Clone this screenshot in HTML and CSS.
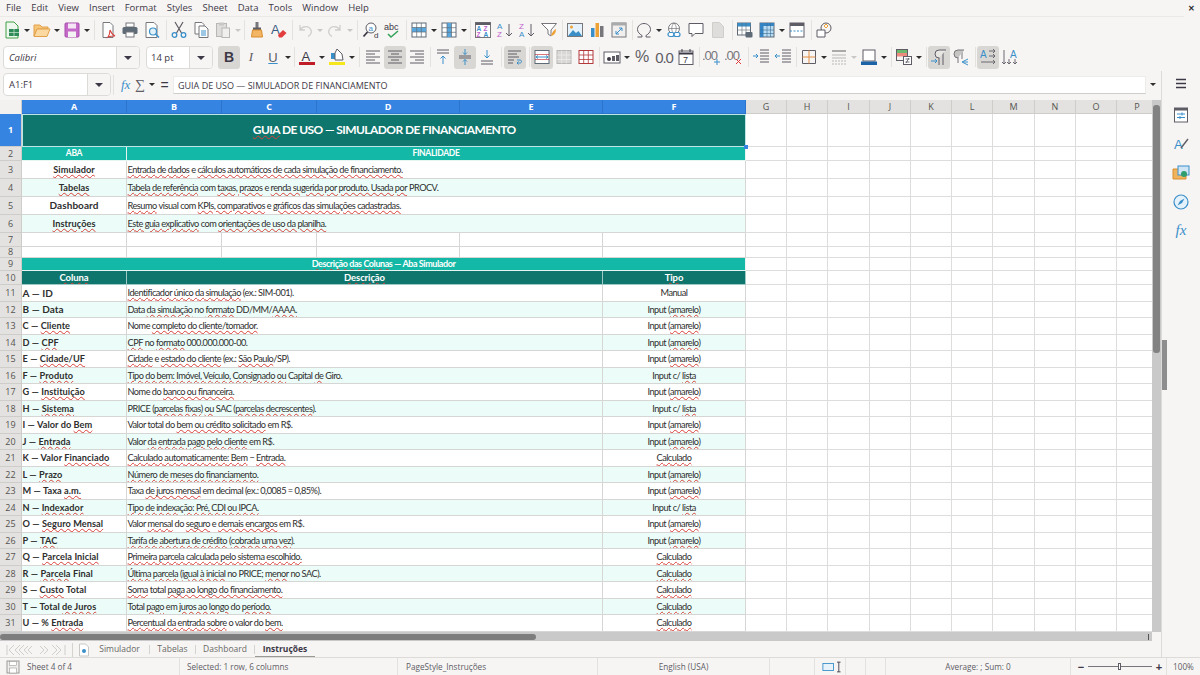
FILE: index.html
```html
<!DOCTYPE html>
<html lang="pt">
<head>
<meta charset="utf-8">
<title>Simulador de Financiamento</title>
<link rel="stylesheet" href="styles.css">
</head>
<body>
<header class="menubar">
  <span>File</span><span>Edit</span><span>View</span><span>Insert</span><span>Format</span><span>Styles</span><span>Sheet</span><span>Data</span><span>Tools</span><span>Window</span><span>Help</span>
  <span class="close">✕</span>
</header>

<div class="tb tb1">
  <span class="ib"><svg viewBox="0 0 18 18"><path d="M3 1h8l4 4v12H3z" fill="#eef7ee" stroke="#43a047"/><rect x="6" y="8" width="10" height="7" fill="#2e8b57"/><path d="M6 11.5h10M11 8v7" stroke="#cfe8d5" stroke-width=".7"/></svg></span><span class="dd"></span>
  <span class="ib"><svg viewBox="0 0 18 18"><path d="M1 4h6l2 2h6v2H4L1 15z" fill="#f6c67a" stroke="#e2a14a"/><path d="M4 8h13l-3 7.5H1z" fill="#fcd9a0" stroke="#e2a14a"/></svg></span><span class="dd"></span>
  <span class="ib"><svg viewBox="0 0 18 18"><rect x="2" y="2" width="14" height="14" rx="1" fill="#c56ac9" stroke="#a94dae"/><rect x="5" y="2.5" width="8" height="5" fill="#f5e6f6"/><rect x="5" y="10.5" width="8" height="5.5" fill="#f3f3f3"/></svg></span><span class="dd"></span>
  <span class="s6"></span>
  <span class="ib"><svg viewBox="0 0 18 18"><path d="M4 1.5h7l3 3V16.5H4z" fill="#fff" stroke="#77767b"/><path d="M9 16c2-3 2-6 2-7 1 3 3 5 5 6-2 0-5 0-7 1z" fill="none" stroke="#d9433f" stroke-width="1.1"/></svg></span>
  <span class="ib"><svg viewBox="0 0 18 18"><rect x="5" y="2" width="8" height="4" fill="#fff" stroke="#77767b"/><rect x="1.5" y="6" width="15" height="7" rx="1.5" fill="#5e6b76"/><rect x="5" y="11" width="8" height="5" fill="#fff" stroke="#77767b"/></svg></span>
  <span class="ib"><svg viewBox="0 0 18 18"><path d="M3 1.5h8l3 3V16.500H3z" fill="#fff" stroke="#77767b"/><circle cx="10" cy="10.500" r="3.500" fill="#e3f1fb" stroke="#3a8fc9" stroke-width="1.200"/><path d="M12.500 13l3.500 3.500" stroke="#3a8fc9" stroke-width="1.500"/></svg></span>
  <span class="s5"></span>
  <span class="ib"><svg viewBox="0 0 18 18"><path d="M5 1l6.500 11M13 1L6.500 12" stroke="#5e5c64" stroke-width="1.200" fill="none"/><circle cx="4.500" cy="14" r="2.300" fill="none" stroke="#3a8fc9" stroke-width="1.300"/><circle cx="13.500" cy="14" r="2.300" fill="none" stroke="#3a8fc9" stroke-width="1.300"/></svg></span>
  <span class="ib"><svg viewBox="0 0 18 18"><path d="M3 1.500h7l2 2V13H3z" fill="#fff" stroke="#77767b"/><path d="M7 5h6l3 3v8.500H7z" fill="#fff" stroke="#77767b"/><path d="M9 10h5M9 12h5M9 14h5" stroke="#3a8fc9"/></svg></span>
  <span class="ib off"><svg viewBox="0 0 18 18"><rect x="2.500" y="2.500" width="10" height="13" fill="#dedddb" stroke="#b8b7b5"/><rect x="5" y="1.500" width="5" height="3" fill="#c8c7c5"/><rect x="8" y="7" width="7.500" height="9.500" fill="#f0efee" stroke="#b8b7b5"/></svg></span><span class="dd off"></span>
  <span class="s4"></span>
  <span class="ib"><svg viewBox="0 0 18 18"><rect x="7.500" y="1" width="3" height="6" fill="#77767b"/><rect x="5" y="6.500" width="8" height="2.500" fill="#5e5c64"/><path d="M4.500 9h9l1 7h-11z" fill="#f3b664" stroke="#d98d2c"/></svg></span>
  <span class="ib"><svg viewBox="0 0 18 18"><text x="1" y="13" class="g" fill="#3d5a80">A</text><path d="M8 14l5-5 3.500 3-4.500 4.500H9z" fill="#e23c3c"/></svg></span>
  <span class="s4"></span>
  <span class="ib off"><svg viewBox="0 0 18 18"><path d="M4 4v5h5M4.500 8.500C7 4.500 13 4.500 15 9c.8 2.500-.5 5-3 6.500" fill="none" stroke="#cfcecb" stroke-width="1.300"/></svg></span><span class="dd off"></span>
  <span class="ib off"><svg viewBox="0 0 18 18"><path d="M14 4v5H9M13.500 8.500C11 4.500 5 4.500 3 9c-.8 2.500.5 5 3 6.500" fill="none" stroke="#cfcecb" stroke-width="1.300"/></svg></span><span class="dd off"></span>
  <span class="s6"></span>
  <span class="ib"><svg viewBox="0 0 18 18"><circle cx="9" cy="7" r="5" fill="#fff" stroke="#5e5c64"/><path d="M5.500 11L1.500 15.500" stroke="#3d3846" stroke-width="1.800"/><text x="6.500" y="9.500" class="g7" fill="#3a8fc9">a</text><text x="12" y="17" class="g7" fill="#3d3846">d</text></svg></span>
  <span class="ib"><svg viewBox="0 0 18 18"><text x="0" y="9" class="g8" fill="#3d3846">abc</text><path d="M4 13l3 3 7-6" fill="none" stroke="#33a15a" stroke-width="1.500"/></svg></span>
  <span class="s4"></span>
  <span class="ib"><svg viewBox="0 0 18 18"><rect x="2" y="2" width="14" height="14" fill="#fff" stroke="#5e6b76"/><rect x="2" y="6.500" width="14" height="4.500" fill="#5aa7de"/><path d="M2 6.500h14M2 11h14M6.700 2v14M11.300 2v14" stroke="#5e6b76" stroke-width=".7"/></svg></span><span class="dd"></span>
  <span class="ib"><svg viewBox="0 0 18 18"><rect x="2" y="2" width="14" height="14" fill="#fff" stroke="#5e6b76"/><rect x="7" y="2" width="4.500" height="14" fill="#5aa7de"/><path d="M2 6.700h14M2 11.300h14M7 2v14M11.500 2v14" stroke="#5e6b76" stroke-width=".7"/></svg></span><span class="dd"></span>
  <span class="s4"></span>
  <span class="ib"><svg viewBox="0 0 18 18"><rect x="1.500" y="1.500" width="15" height="15" fill="#fff" stroke="#77767b"/><rect x="1.500" y="1.500" width="15" height="2.500" fill="#5e5c64"/><text x="2.500" y="10" class="g6" fill="#3a8fc9">A</text><text x="9.500" y="10" class="g6" fill="#c061cb">Z</text><text x="2.500" y="16" class="g6" fill="#c061cb">Z</text><text x="9.500" y="16" class="g6" fill="#3a8fc9">A</text></svg></span>
  <span class="ib"><svg viewBox="0 0 18 18"><text x="1" y="8" class="g7" fill="#3a8fc9">A</text><text x="1" y="16" class="g7" fill="#c061cb">Z</text><path d="M13 3v12m-3-3l3 3 3-3" fill="none" stroke="#5e5c64"/></svg></span>
  <span class="ib"><svg viewBox="0 0 18 18"><text x="1" y="8" class="g7" fill="#c061cb">Z</text><text x="1" y="16" class="g7" fill="#3a8fc9">A</text><path d="M13 3v12m-3-3l3 3 3-3" fill="none" stroke="#5e5c64"/></svg></span>
  <span class="ib"><svg viewBox="0 0 18 18"><path d="M1.500 2.500h15L11 9v6l-3-2V9z" fill="#fff" stroke="#77767b"/><path d="M11 15c1-4 3-6 5-7 0 3-1 6-5 7z" fill="#efa234"/></svg></span>
  <span class="s4"></span>
  <span class="ib"><svg viewBox="0 0 18 18"><rect x="1.500" y="2.500" width="15" height="13" fill="#e5f2fb" stroke="#77767b"/><circle cx="5.500" cy="6" r="1.500" fill="#efa234"/><path d="M2 15l5-6 3 3 2.500-2 3.500 5z" fill="#3a8fc9"/></svg></span>
  <span class="ib"><svg viewBox="0 0 18 18"><rect x="3" y="7" width="3.500" height="9" fill="#3a8fc9"/><rect x="7.500" y="2" width="3.500" height="14" fill="#efa234"/><rect x="12" y="5" width="3.500" height="11" fill="#77767b"/></svg></span>
  <span class="ib"><svg viewBox="0 0 18 18"><rect x="2" y="2" width="14" height="14" fill="#f0efee" stroke="#77767b"/><rect x="2" y="2" width="14" height="2.500" fill="#aaa"/><path d="M6 13l6-6M12 7H9M12 7v3M6 13h3M6 13v-3" fill="none" stroke="#3a8fc9"/></svg></span>
  <span class="s3"></span>
  <span class="ib"><svg viewBox="0 0 18 18"><path d="M2.500 16H7v-1.500C4.500 13 2.500 11 2.500 8.500 2.500 5 5.500 2.500 9 2.500s6.500 2.500 6.500 6c0 2.500-2 4.500-4.500 6V16h4.500" fill="none" stroke="#5e5c64"/></svg></span><span class="dd"></span>
  <span class="ib"><svg viewBox="0 0 18 18"><circle cx="9" cy="7.500" r="5.500" fill="#fff" stroke="#77767b"/><path d="M3.500 7.500h11M9 2c-3 3-3 8 0 11M9 2c3 3 3 8 0 11" fill="none" stroke="#77767b" stroke-width=".7"/><rect x="3" y="11.500" width="6" height="4" rx="2" fill="#fff" stroke="#3a8fc9" stroke-width="1.200"/><rect x="9" y="11.500" width="6" height="4" rx="2" fill="#fff" stroke="#3a8fc9" stroke-width="1.200"/></svg></span>
  <span class="ib"><svg viewBox="0 0 18 18"><path d="M2 2.500h14v10H8l-3 3v-3H2z" fill="#fff" stroke="#5e5c64"/></svg></span>
  <span class="ib off"><svg viewBox="0 0 18 18"><path d="M3.500 1.500h7l4 4v11h-11z" fill="#dedddb" stroke="#cfcecb"/></svg></span>
  <span class="s5"></span>
  <span class="ib"><svg viewBox="0 0 18 18"><rect x="1.500" y="2" width="13" height="12" fill="#fff" stroke="#5e6b76"/><rect x="1.500" y="2" width="13" height="3.500" fill="#3a8fc9"/><path d="M1.500 9h13M6 2v12M10 2v12" stroke="#5e6b76" stroke-width=".6"/><rect x="9.500" y="11" width="7" height="5.500" rx="1" fill="#5e6b76"/></svg></span>
  <span class="ib"><svg viewBox="0 0 18 18"><rect x="2" y="2" width="14" height="14" fill="#b9dcf2" stroke="#5e6b76"/><rect x="2" y="2" width="14" height="3" fill="#3584c4"/><rect x="2" y="2" width="3.500" height="14" fill="#3584c4"/><path d="M2 9h14M2 12.500h14M9 2v14M12.500 2v14" stroke="#3a6d94" stroke-width=".6"/></svg></span><span class="dd"></span>
  <span class="ib"><svg viewBox="0 0 18 18"><rect x="2" y="2" width="14" height="14" fill="#fff" stroke="#5e5c64"/><rect x="2" y="2" width="14" height="3" fill="#5e5c64"/><path d="M2 10h14" stroke="#3a8fc9" stroke-dasharray="2 1.500"/></svg></span>
  <span class="s5"></span>
  <span class="ib"><svg viewBox="0 0 18 18"><circle cx="11" cy="7" r="5" fill="none" stroke="#5e5c64"/><path d="M2 9h8v7H2z" fill="#fff" stroke="#5e5c64"/><path d="M9 5l2-2 2 2-2 2z" fill="none" stroke="#efa234"/></svg></span>
</div>

<div class="tb tb2">
  <span class="combo font"><em>Calibri</em><span class="arrow"></span></span>
  <span class="combo size"><span class="val">14 pt</span><span class="arrow"></span></span>
  <span class="ib on txt bold">B</span>
  <span class="ib txt ital">I</span>
  <span class="ib txt under">U</span><span class="dd"></span>
  <span class="s4"></span>
  <span class="ib"><svg viewBox="0 0 18 18"><text x="3.500" y="12.500" class="g" fill="#3d3846">A</text><rect x="1" y="14" width="16" height="3" fill="#c01c28"/></svg></span><span class="dd"></span>
  <span class="ib"><svg viewBox="0 0 18 18"><path d="M3 5h6v6H3z" fill="#3a8fc9"/><path d="M9 1l5 5 1 6H7V5z" fill="#fff" stroke="#5e5c64"/><rect x="1" y="14" width="16" height="3" fill="#f6e71c"/></svg></span><span class="dd"></span>
  <span class="s6"></span>
  <span class="ib"><svg viewBox="0 0 18 18"><path d="M2 3h14M2 6h9M2 9h14M2 12h9M2 15h14" stroke="#5e5c64"/></svg></span>
  <span class="ib on"><svg viewBox="0 0 18 18"><path d="M2 3h14M5 6h8M2 9h14M5 12h8M2 15h14" stroke="#5e5c64"/></svg></span>
  <span class="ib"><svg viewBox="0 0 18 18"><path d="M2 3h14M7 6h9M2 9h14M7 12h9M2 15h14" stroke="#5e5c64"/></svg></span>
  <span class="s4"></span>
  <span class="ib"><svg viewBox="0 0 18 18"><path d="M3 2h12M3 5h12" fill="none" stroke="#5e5c64"/><path d="M9 16V8m-2.500 2.500L9 8l2.500 2.500" fill="none" stroke="#3a8fc9"/></svg></span>
  <span class="ib on"><svg viewBox="0 0 18 18"><path d="M3 8h12M3 10h12" stroke="#5e5c64"/><path d="M9 1v5.500M7 4.500L9 6.500 11 4.500M9 17v-5.500M7 13.500l2-2 2 2" fill="none" stroke="#3a8fc9"/></svg></span>
  <span class="ib"><svg viewBox="0 0 18 18"><path d="M3 13h12M3 16h12" stroke="#5e5c64"/><path d="M9 2v8m-2.500-2.500L9 10l2.500-2.500" fill="none" stroke="#3a8fc9"/></svg></span>
  <span class="s6"></span>
  <span class="ib on"><svg viewBox="0 0 18 18"><path d="M2 3h13M2 6h9M2 9h11M2 12h6M2 15h5" stroke="#5e5c64"/><path d="M11 12h3c2 0 2 3 0 3h-3m1.500-1.500L11 15l1.500 1.500" fill="none" stroke="#3a8fc9"/></svg></span>
  <span class="s5"></span>
  <span class="ib on"><svg viewBox="0 0 18 18"><rect x="2" y="2.500" width="14" height="13" fill="#fff" stroke="#5e6b76"/><path d="M2 6.500h14M2 11.500h14" stroke="#c01c28" stroke-width=".6"/><path d="M3 9h12M3 9l2-1.500M3 9l2 1.500M15 9l-2-1.500M15 9l-2 1.500" stroke="#3a8fc9" fill="none"/></svg></span>
  <span class="ib off"><svg viewBox="0 0 18 18"><rect x="2" y="2.500" width="14" height="13" fill="#d8d7d5" stroke="#b8b7b5"/><path d="M2 7h14M2 11.500h14M6.700 2.500v13M11.300 2.500v13" stroke="#f0efee" stroke-width=".7"/></svg></span>
  <span class="ib"><svg viewBox="0 0 18 18"><rect x="2" y="2.500" width="14" height="13" fill="#fff" stroke="#b33a3a"/><path d="M2 7h14M2 11.500h14M6.700 2.500v13M11.300 2.500v13" stroke="#b33a3a" stroke-width=".8"/></svg></span>
  <span class="s4"></span>
  <span class="ib"><svg viewBox="0 0 18 18"><rect x="1" y="4" width="16" height="11" fill="#fff" stroke="#5e5c64"/><circle cx="6" cy="11" r="2" fill="#3d3846"/><rect x="9" y="8" width="3" height="5" fill="#5e5c64"/><rect x="13" y="7" width="3" height="6" fill="#5e5c64"/></svg></span><span class="dd"></span>
  <span class="ib txt pct">%</span>
  <span class="ib txt num">0.0</span>
  <span class="ib"><svg viewBox="0 0 18 18"><rect x="2" y="3" width="14" height="13.500" fill="#fff" stroke="#5e5c64"/><path d="M2 5.500h14" stroke="#3d3846" stroke-width="2"/><path d="M5 1v3M13 1v3" stroke="#3d3846"/><text x="6" y="14.500" class="g8" fill="#3d3846">7</text></svg></span>
  <span class="s4"></span>
  <span class="ib"><svg viewBox="0 0 18 18"><text x="-1" y="12" class="g9" fill="#77767b">.00</text><path d="M14 11v6M11 14h6" stroke="#3a8fc9"/></svg></span>
  <span class="ib"><svg viewBox="0 0 18 18"><text x="-1" y="12" class="g9" fill="#77767b">.00</text><path d="M11 11l5 5M16 11l-5 5" stroke="#e23c3c"/></svg></span>
  <span class="s5"></span>
  <span class="ib"><svg viewBox="0 0 18 18"><path d="M8 2h9M8 5h9M8 8h9M8 11h9M8 14h9" stroke="#5e5c64"/><path d="M1 8h5M4 6l2 2-2 2" fill="none" stroke="#3a8fc9"/></svg></span>
  <span class="ib"><svg viewBox="0 0 18 18"><path d="M8 2h9M8 5h9M8 8h9M8 11h9M8 14h9" stroke="#5e5c64"/><path d="M6 8H1M3 6L1 8l2 2" fill="none" stroke="#3a8fc9"/></svg></span>
  <span class="s4"></span>
  <span class="ib"><svg viewBox="0 0 18 18"><path d="M2.500 2.500h13v13h-13z" fill="none" stroke="#5e5c64"/><path d="M9 2.500v13M2.500 9h13" stroke="#e08e45"/></svg></span><span class="dd"></span>
  <span class="ib off"><svg viewBox="0 0 18 18"><path d="M2 3h14" stroke="#aaa" stroke-width="2"/><path d="M2 7h14M2 10h14" stroke="#b8b7b5"/><path d="M2 13h14M2 16h14" stroke="#b8b7b5" stroke-dasharray="2 1"/></svg></span><span class="dd off"></span>
  <span class="ib"><svg viewBox="0 0 18 18"><rect x="3" y="2" width="12" height="11" fill="#fff" stroke="#5e5c64"/><rect x="1" y="13.500" width="16" height="3.500" fill="#1c62a6"/></svg></span><span class="dd"></span>
  <span class="s5"></span>
  <span class="ib"><svg viewBox="0 0 18 18"><rect x="1.500" y="1.500" width="11" height="3.500" fill="#6fb96f"/><rect x="1.500" y="5" width="11" height="3.500" fill="#ef8a7f"/><rect x="1.500" y="1.500" width="11" height="11" fill="none" stroke="#5e5c64"/><rect x="8.500" y="8.500" width="8" height="8" fill="#fff" stroke="#5e5c64"/><path d="M10.500 11h4M10.500 14h4M11 15l3-5" stroke="#3d3846" stroke-width=".7"/></svg></span><span class="dd"></span>
  <span class="s5"></span>
  <span class="ib on"><svg viewBox="0 0 18 18"><path d="M9 3v14M13 3v14" stroke="#5e5c64"/><path d="M16 2H9a4 4 0 0 0 0 8" fill="#e8e6e3" stroke="#5e5c64"/><path d="M1 13h6M5 11l2 2-2 2" fill="none" stroke="#3a8fc9"/></svg></span>
  <span class="ib"><svg viewBox="0 0 18 18"><path d="M6 3v12M10 3v8" stroke="#77767b"/><path d="M12 2H6a4 4 0 0 0 0 8" fill="#c6c5c3" stroke="#77767b"/><path d="M10 14l6-3M10 14l6 3M11 14h5" stroke="#3a8fc9" fill="none"/></svg></span>
  <span class="s5"></span>
  <span class="ib on"><svg viewBox="0 0 18 18"><text x="1" y="10" class="g8b" fill="#3a8fc9">A</text><path d="M10 3h6M14 1l2 2-2 2M10 8h6M14 6l2 2-2 2M2 14h14M14 12l2 2-2 2" fill="none" stroke="#5e5c64" stroke-width=".9"/></svg></span>
  <span class="ib"><svg viewBox="0 0 18 18"><text x="9" y="10" class="g8b" fill="#3a8fc9">A</text><path d="M3 2v14M1 14l2 2 2-2M8 11v5M6 14l2 2 2-2M14 11v5M12 14l2 2 2-2" fill="none" stroke="#5e5c64" stroke-width=".9"/></svg></span>
</div>

<div class="workspace">
  <main class="center">
    <div class="formula">
      <span class="combo name"><span class="val">A1:F1</span><span class="arrow"></span></span>
      <span class="fsep"></span>
      <span class="fx">fx</span>
      <span class="sigma">∑</span><span class="dd"></span>
      <span class="eq">=</span>
      <span class="finput">GUIA DE USO — SIMULADOR DE FINANCIAMENTO</span>
      <span class="dd fdd"></span>
    </div>
    <div class="sheetrow">
      <div class="sheet">
        <div class="corner"></div><div class="ch sel">A</div><div class="ch sel">B</div><div class="ch sel">C</div><div class="ch sel">D</div><div class="ch sel">E</div><div class="ch sel">F</div><div class="ch">G</div><div class="ch">H</div><div class="ch">I</div><div class="ch">J</div><div class="ch">K</div><div class="ch">L</div><div class="ch">M</div><div class="ch">N</div><div class="ch">O</div><div class="ch">P</div>

        <div class="rh sel">1</div><div class="c title s6c"><span class="titletext"><u>GUIA</u> DE USO — SIMULADOR DE FINANCIAMENTO</span><span class="handle"></span></div><i></i><i></i><i></i><i></i><i></i><i></i><i></i><i></i><i></i><i></i>
        <div class="rh">2</div><div class="c h2 ctr bd">ABA</div><div class="c h2 ctr s5c bd">FINALIDADE</div><i></i><i></i><i></i><i></i><i></i><i></i><i></i><i></i><i></i><i></i>
        <div class="rh">3</div><div class="c ctr bd"><u>Simulador</u></div><div class="c s5c"><u>Entrada de dados</u> e <u>cálculos automáticos de cada simulação de financiamento.</u></div><i></i><i></i><i></i><i></i><i></i><i></i><i></i><i></i><i></i><i></i>
        <div class="rh">4</div><div class="c ctr bd m"><u>Tabelas</u></div><div class="c s5c m"><u>Tabela de referência</u> com <u>taxas, prazos</u> e <u>renda sugerida por produto. Usada por</u> PROCV.</div><i></i><i></i><i></i><i></i><i></i><i></i><i></i><i></i><i></i><i></i>
        <div class="rh">5</div><div class="c ctr bd big">Dashboard</div><div class="c s5c"><u>Resumo</u> visual com <u>KPIs, comparativos</u> e <u>gráficos das simulações cadastradas.</u></div><i></i><i></i><i></i><i></i><i></i><i></i><i></i><i></i><i></i><i></i>
        <div class="rh">6</div><div class="c ctr bd m"><u>Instruções</u></div><div class="c s5c m"><u>Este guia explicativo</u> com <u>orientações de uso da planilha.</u></div><i></i><i></i><i></i><i></i><i></i><i></i><i></i><i></i><i></i><i></i>
        <div class="rh">7</div><div class="c"></div><div class="c"></div><div class="c"></div><div class="c"></div><div class="c"></div><div class="c"></div><i></i><i></i><i></i><i></i><i></i><i></i><i></i><i></i><i></i><i></i>
        <div class="rh">8</div><div class="c"></div><div class="c"></div><div class="c"></div><div class="c"></div><div class="c"></div><div class="c"></div><i></i><i></i><i></i><i></i><i></i><i></i><i></i><i></i><i></i><i></i>
        <div class="rh">9</div><div class="c h2 ctr s6c sec"><u>Descrição das Colunas</u> — Aba Simulador</div><i></i><i></i><i></i><i></i><i></i><i></i><i></i><i></i><i></i><i></i>
        <div class="rh">10</div><div class="c h3 ctr"><u>Coluna</u></div><div class="c h3 ctr s4c"><u>Descrição</u></div><div class="c h3 ctr"><u>Tipo</u></div><i></i><i></i><i></i><i></i><i></i><i></i><i></i><i></i><i></i><i></i>

        <div class="rh">11</div><div class="c bd big">A — ID</div><div class="c s4c"><u>Identificador único da simulação</u> (ex.: SIM-001).</div><div class="c ctr">Manual</div><i></i><i></i><i></i><i></i><i></i><i></i><i></i><i></i><i></i><i></i>
        <div class="rh">12</div><div class="c bd big m">B — Data</div><div class="c s4c m">Data <u>da simulação</u> no <u>formato</u> DD/MM/<u>AAAA.</u></div><div class="c ctr m">Input (<u>amarelo</u>)</div><i></i><i></i><i></i><i></i><i></i><i></i><i></i><i></i><i></i><i></i>
        <div class="rh">13</div><div class="c bd">C — <u>Cliente</u></div><div class="c s4c">Nome <u>completo do cliente/tomador.</u></div><div class="c ctr">Input (<u>amarelo</u>)</div><i></i><i></i><i></i><i></i><i></i><i></i><i></i><i></i><i></i><i></i>
        <div class="rh">14</div><div class="c bd m">D — <u>CPF</u></div><div class="c s4c m"><u>CPF</u> no <u>formato</u> 000.000.000-00.</div><div class="c ctr m">Input (<u>amarelo</u>)</div><i></i><i></i><i></i><i></i><i></i><i></i><i></i><i></i><i></i><i></i>
        <div class="rh">15</div><div class="c bd">E — <u>Cidade/UF</u></div><div class="c s4c"><u>Cidade</u> e <u>estado do cliente</u> (ex.: <u>São Paulo</u>/SP).</div><div class="c ctr">Input (<u>amarelo</u>)</div><i></i><i></i><i></i><i></i><i></i><i></i><i></i><i></i><i></i><i></i>
        <div class="rh">16</div><div class="c bd m">F — <u>Produto</u></div><div class="c s4c m"><u>Tipo do bem: Imóvel, Veículo, Consignado ou</u> Capital <u>de</u> Giro.</div><div class="c ctr m">Input c/ <u>lista</u></div><i></i><i></i><i></i><i></i><i></i><i></i><i></i><i></i><i></i><i></i>
        <div class="rh">17</div><div class="c bd">G — <u>Instituição</u></div><div class="c s4c">Nome do <u>banco ou financeira.</u></div><div class="c ctr">Input (<u>amarelo</u>)</div><i></i><i></i><i></i><i></i><i></i><i></i><i></i><i></i><i></i><i></i>
        <div class="rh">18</div><div class="c bd m">H — <u>Sistema</u></div><div class="c s4c m">PRICE (<u>parcelas fixas</u>) <u>ou</u> SAC (<u>parcelas decrescentes</u>).</div><div class="c ctr m">Input c/ <u>lista</u></div><i></i><i></i><i></i><i></i><i></i><i></i><i></i><i></i><i></i><i></i>
        <div class="rh">19</div><div class="c bd">I — Valor do <u>Bem</u></div><div class="c s4c">Valor total do <u>bem ou crédito solicitado</u> em R$.</div><div class="c ctr">Input (<u>amarelo</u>)</div><i></i><i></i><i></i><i></i><i></i><i></i><i></i><i></i><i></i><i></i>
        <div class="rh">20</div><div class="c bd m">J — <u>Entrada</u></div><div class="c s4c m">Valor <u>da entrada pago pelo cliente</u> em R$.</div><div class="c ctr m">Input (<u>amarelo</u>)</div><i></i><i></i><i></i><i></i><i></i><i></i><i></i><i></i><i></i><i></i>
        <div class="rh">21</div><div class="c bd">K — Valor <u>Financiado</u></div><div class="c s4c"><u>Calculado automaticamente: Bem</u> − <u>Entrada.</u></div><div class="c ctr"><u>Calculado</u></div><i></i><i></i><i></i><i></i><i></i><i></i><i></i><i></i><i></i><i></i>
        <div class="rh">22</div><div class="c bd m">L — <u>Prazo</u></div><div class="c s4c m"><u>Número de meses do financiamento.</u></div><div class="c ctr m">Input (<u>amarelo</u>)</div><i></i><i></i><i></i><i></i><i></i><i></i><i></i><i></i><i></i><i></i>
        <div class="rh">23</div><div class="c bd">M — Taxa <u>a.m.</u></div><div class="c s4c">Taxa <u>de juros mensal</u> em decimal (ex.: 0,0085 = 0,85%).</div><div class="c ctr">Input (<u>amarelo</u>)</div><i></i><i></i><i></i><i></i><i></i><i></i><i></i><i></i><i></i><i></i>
        <div class="rh">24</div><div class="c bd m">N — <u>Indexador</u></div><div class="c s4c m"><u>Tipo de indexação: Pré, CDI ou IPCA.</u></div><div class="c ctr m">Input c/ <u>lista</u></div><i></i><i></i><i></i><i></i><i></i><i></i><i></i><i></i><i></i><i></i>
        <div class="rh">25</div><div class="c bd">O — <u>Seguro Mensal</u></div><div class="c s4c">Valor <u>mensal</u> do <u>seguro</u> e <u>demais encargos</u> em R$.</div><div class="c ctr">Input (<u>amarelo</u>)</div><i></i><i></i><i></i><i></i><i></i><i></i><i></i><i></i><i></i><i></i>
        <div class="rh">26</div><div class="c bd m">P — <u>TAC</u></div><div class="c s4c m"><u>Tarifa de abertura de crédito</u> (<u>cobrada uma vez</u>).</div><div class="c ctr m">Input (<u>amarelo</u>)</div><i></i><i></i><i></i><i></i><i></i><i></i><i></i><i></i><i></i><i></i>
        <div class="rh">27</div><div class="c bd">Q — <u>Parcela Inicial</u></div><div class="c s4c"><u>Primeira parcela calculada pelo sistema escolhido.</u></div><div class="c ctr"><u>Calculado</u></div><i></i><i></i><i></i><i></i><i></i><i></i><i></i><i></i><i></i><i></i>
        <div class="rh">28</div><div class="c bd m">R — <u>Parcela</u> Final</div><div class="c s4c m"><u>Última parcela</u> (<u>igual à inicial</u> no PRICE; <u>menor</u> no SAC).</div><div class="c ctr m"><u>Calculado</u></div><i></i><i></i><i></i><i></i><i></i><i></i><i></i><i></i><i></i><i></i>
        <div class="rh">29</div><div class="c bd">S — <u>Custo</u> Total</div><div class="c s4c"><u>Soma</u> total <u>paga ao longo do financiamento.</u></div><div class="c ctr"><u>Calculado</u></div><i></i><i></i><i></i><i></i><i></i><i></i><i></i><i></i><i></i><i></i>
        <div class="rh">30</div><div class="c bd m">T — Total <u>de Juros</u></div><div class="c s4c m">Total <u>pago</u> em <u>juros ao longo</u> do <u>período.</u></div><div class="c ctr m"><u>Calculado</u></div><i></i><i></i><i></i><i></i><i></i><i></i><i></i><i></i><i></i><i></i>
        <div class="rh">31</div><div class="c bd">U — % <u>Entrada</u></div><div class="c s4c"><u>Percentual da entrada sobre</u> o valor do <u>bem.</u></div><div class="c ctr"><u>Calculado</u></div><i></i><i></i><i></i><i></i><i></i><i></i><i></i><i></i><i></i><i></i>
      </div>
      <div class="vscroll"><div class="vthumb"></div></div>
    </div>
    <div class="hscroll"><div class="hthumb"></div><div class="htick"></div></div>
    <nav class="tabs">
      <span class="navbtns"><svg viewBox="0 0 60 14"><path d="M1 2v10M8 2L3 7l5 5M18 2l-5 5 5 5M14 2l-5 5 5 5M22 3l-4 4 4 4M26 3l-4 4 4 4M34 3l4 4-4 4M38 3l4 4-4 4M46 2l5 5-5 5M50 2l5 5-5 5M59 2v10" fill="none" stroke="#cfcecb"/></svg></span>
      <span class="tsep first"></span>
      <span class="addtab"><svg viewBox="0 0 12 14"><path d="M1.500 1h6l3 3v9h-9z" fill="#fff" stroke="#c8c7c5"/><circle cx="6" cy="8" r="2" fill="#3a8fc9"/></svg></span>
      <span class="tab">Simulador</span><span class="tsep"></span>
      <span class="tab">Tabelas</span><span class="tsep"></span>
      <span class="tab">Dashboard</span><span class="tsep"></span>
      <span class="tab active">Instruções</span>
    </nav>
  </main>
  <aside class="sidebar">
    <span class="handle-side"></span>
    <span class="si menu"><svg viewBox="0 0 18 18"><path d="M4 4.500h10M4 8.500h10M4 12.500h10" stroke="#3d3846" stroke-width="1.500"/></svg></span>
    <span class="si"><svg viewBox="0 0 18 18"><rect x="2.500" y="2" width="13" height="14" fill="#fff" stroke="#5e5c64"/><rect x="2.500" y="2" width="13" height="2.500" fill="#5e5c64"/><path d="M5 8h8M5 11.500h8" stroke="#3a8fc9"/><path d="M10 6.500v3M8 10v3" stroke="#3a8fc9"/></svg></span>
    <span class="si"><svg viewBox="0 0 18 18"><text x="2" y="14" class="g" fill="#3a8fc9" font-style="italic">A</text><path d="M9 13l7-9" stroke="#5e5c64" stroke-width="1.400"/></svg></span>
    <span class="si"><svg viewBox="0 0 18 18"><path d="M1 5h6l1.500 1.500H14V15H1z" fill="#efb35e" stroke="#d98d2c"/><rect x="6" y="2" width="11" height="9" fill="#cfe5f5" stroke="#3a8fc9"/><circle cx="12" cy="10" r="3" fill="#2f9e6e"/></svg></span>
    <span class="si"><svg viewBox="0 0 18 18"><circle cx="9" cy="9" r="7" fill="#e6f2fb" stroke="#3a8fc9" stroke-width="1.200"/><path d="M12.500 5.500L10 10 5.500 12.500 8 8z" fill="#3a8fc9"/></svg></span>
    <span class="si fxs">fx</span>
  </aside>
</div>

<footer class="status">
  <span class="st st1"><svg viewBox="0 0 14 14"><rect x="1" y="1" width="12" height="12" fill="#f0efee" stroke="#9a9996"/><rect x="3.500" y="1.500" width="7" height="4" fill="#fff" stroke="#9a9996" stroke-width=".6"/><rect x="3.500" y="8" width="7" height="5" fill="#fff" stroke="#9a9996" stroke-width=".6"/></svg><span>Sheet 4 of 4</span></span>
  <span class="st st2">Selected: 1 row, 6 columns</span>
  <span class="st st3">PageStyle_Instruções</span>
  <span class="st st4">English (USA)</span>
  <span class="st st5"></span>
  <span class="st st6"><svg viewBox="0 0 26 14"><rect x="1" y="3" width="12" height="8" fill="#e8f2fa" stroke="#3a8fc9"/><path d="M17 1.500h4M19 1.500v11M17 12.500h4" stroke="#3d3846" fill="none"/></svg></span>
  <span class="st st7"></span>
  <span class="st st7"></span>
  <span class="st st8">Average: ; Sum: 0</span>
  <span class="st st9"><span class="zbtn">−</span><span class="slider"><span class="sknob"></span></span><span class="zbtn">+</span></span>
  <span class="st st10">100%</span>
</footer>
</body>
</html>
```
FILE: styles.css
```css
* { box-sizing: border-box; }
html, body { margin: 0; padding: 0; }
body {
  width: 1200px; height: 675px; overflow: hidden;
  display: flex; flex-direction: column;
  background: #f6f5f4; color: #3d3846;
  font-family: "Open Sans", "Noto Sans", sans-serif; font-size: 9px;
}
.menubar {
  height: 17px; flex: none; display: flex; align-items: center;
  padding: 0 0 1px 6px; gap: 10.100px; font-size: 9.500px; color: #3d3846;
  border-bottom: 1px solid #ebe9e6; margin-right: 16px; position: relative;
}
.close { position: absolute; right: -11px; top: 2px; font-size: 8px; font-weight: 700; color: #2e2e2e; }

.tb { display: flex; align-items: center; flex: none; }
.tb1 { height: 26px; padding-left: 1px; }
.tb2 { height: 28px; padding-left: 3px; }
.ib {
  width: 22px; height: 23px; flex: none; display: flex; align-items: center; justify-content: center;
  border-radius: 3px;
}
.ib svg { width: 18px; height: 18px; display: block; }
.ib.on { background: #d9d7d4; }
.dd { width: 8px; height: 23px; flex: none; position: relative; }
.dd::after {
  content: ""; position: absolute; left: 1px; top: 10px;
  border: 3px solid transparent; border-top: 3.500px solid #2e2e2e; border-bottom: 0;
}
.dd.off::after { border-top-color: #c8c7c5; }
.s3, .s4, .s5, .s6 { flex: none; height: 20px; position: relative; }
.s3 { width: 3px; } .s4 { width: 4px; } .s5 { width: 5px; } .s6 { width: 6px; }
.s3::after, .s4::after, .s5::after, .s6::after {
  content: ""; position: absolute; left: 50%; top: 0; bottom: 0; width: 1px; background: #e4e2df;
}
.g { font: 400 13px "Liberation Sans", sans-serif; }
.g6 { font: 700 6.500px "Liberation Sans", sans-serif; }
.g7 { font: 400 8px "Liberation Sans", sans-serif; }
.g8 { font: 400 9px "Liberation Sans", sans-serif; }
.g8b { font: 400 10px "Liberation Sans", sans-serif; }
.g9 { font: 400 13px "Liberation Sans", sans-serif; letter-spacing: -1px; }

.combo {
  display: flex; align-items: stretch; height: 23px; background: #fff; flex: none;
  border: 1px solid #dddbd8; border-radius: 4px; overflow: hidden; font-size: 9.500px; color: #3d3846;
}
.combo em { flex: 1; padding: 4px 0 0 5px; font-style: italic; }
.combo .val { flex: 1; padding: 4px 0 0 4px; }
.font { width: 137px; margin-right: 6px; }
.size { width: 67px; margin-right: 5px; }
.name { width: 108px; margin-left: 3px; }
.name .val { padding-left: 5px; }
.arrow { width: 23px; background: #f6f5f4; border-left: 1px solid #dddbd8; position: relative; flex: none; }
.arrow::after {
  content: ""; position: absolute; left: 7px; top: 9px;
  border: 4px solid transparent; border-top: 4px solid #3d3846; border-bottom: 0;
}
.txt { font-family: "Liberation Sans", sans-serif; font-size: 13px; color: #5e5c64; }
.bold { font-weight: 700; color: #3d3846; font-size: 14px; }
.ital { font-style: italic; font-family: "Liberation Serif", serif; }
.under { text-decoration: underline; text-decoration-color: #3a8fc9; }
.pct { font-size: 16px; }
.num { font-size: 15px; letter-spacing: -1.200px; }

.workspace { flex: 1; display: flex; min-height: 0; }
.center { width: 1161px; flex: none; display: flex; flex-direction: column; }
.formula { height: 29px; flex: none; display: flex; align-items: center; padding-bottom: 2px; }
.fsep { width: 1px; height: 20px; background: #e4e2df; margin: 0 7px 0 2px; }
.fx { width: 11px; color: #3a8fc9; font: italic 13px "Liberation Serif", serif; }
.sigma { width: 16px; font: 14px "Liberation Serif", serif; color: #5e5c64; text-align: center; }
.eq { width: 13px; font: 14px "Liberation Sans", sans-serif; text-align: center; margin-left: 2px; margin-right: 2px; }
.finput {
  width: 973px; height: 18px; background: #fff; border: 1px solid #ececea; border-bottom: 1px solid #cfcdca;
  font-size: 9px; padding: 2px 0 0 4px; color: #3d3846; flex: none;
}
.fdd { margin-left: 3px; }

.sheetrow { flex: none; height: 532px; display: flex; }
.sheet {
  width: 1152px; height: 532px; overflow: hidden; flex: none; background: #fff;
  display: grid;
  grid-template-columns: 22px 105px 95px 95px 143px 143px 143px 41px 41px 42px 41px 41px 41px 42px 41px 41px 41px;
  grid-template-rows: 14px 32.500px 14px 18px 18px 18px 18px 14px 11px 13.500px 14px repeat(21, 16.500px);
  font-family: "Lato", "Open Sans", sans-serif; font-size: 9.200px; color: #2e2e2e; letter-spacing: -.5px;
}
.corner { background: #f2f1ef; border-right: 1px solid #d0cecb; }
.ch, .rh {
  display: flex; align-items: center; justify-content: center;
  background: #e3e2e0; color: #55534f; font-size: 9px; letter-spacing: 0;
  border-right: 1px solid #cfcdca; border-bottom: 1px solid #cfcdca;
  font-family: "Open Sans", sans-serif; overflow: hidden;
}
.ch.sel { background: #3684e2; color: #fff; font-weight: 700; border-right-color: #2c74cc; border-bottom-color: #2c74cc; }
.rh.sel { background: #3684e2; color: #fff; font-weight: 700; }
.sheet i { display: block; border-right: 1px solid #dedddb; border-bottom: 1px solid #dedddb; background: #fff; }
.c {
  display: flex; align-items: center; white-space: pre-wrap; padding-left: .500px;
  border-right: 1px solid #d6d6d4; border-bottom: 1px solid #d6d6d4; min-width: 0; overflow: hidden; background: #fff;
}
.c > * { flex: none; }
.ctr { justify-content: center; padding-left: 0; }
.bd { font-weight: 700; letter-spacing: .06px; }
.big { font-size: 10px; }
.m { background: #ecfdf9; }
.s4c { grid-column: span 4; }
.s5c { grid-column: span 5; }
.s6c { grid-column: span 6; }
.title {
  background: #0f766e; color: #fff; justify-content: center; font-weight: 700; font-size: 12px; letter-spacing: -.58px;
  position: relative; overflow: visible; outline: 1px solid #bfe6e6; outline-offset: -1px; border: 0; padding-bottom: 2px;
}
.handle { position: absolute; right: -2px; bottom: -2px; width: 4px; height: 4px; background: #3684e2; z-index: 2; }
.h2 { background: #14b8a6; color: #fff; border-color: #e4f5f2; font-size: 8.500px; }
.h2.bd { letter-spacing: -.3px; }
.sec { font-weight: 700; font-size: 9px; letter-spacing: -.42px; }
.h3 { background: #0f766e; color: #fff; font-weight: 700; border-color: #9fc9c5; font-size: 9.500px; letter-spacing: -.1px; }
u { text-decoration: underline wavy #d8403a .7px; text-underline-offset: .500px; }

.vscroll { width: 9px; flex: none; background: #c9c9c9; padding: 5px 1px 0; }
.vthumb { height: 248px; background: #828282; border-radius: 3px; }
.hscroll { height: 9px; flex: none; width: 1152px; background: #c9c9c9; display: flex; align-items: center; justify-content: space-between; }
.hthumb { width: 536px; height: 6px; background: #7d7d7d; border-radius: 3px; }
.htick { width: 1px; height: 6px; background: #555; margin-right: 3px; }

.tabs { height: 17px; flex: none; display: flex; align-items: center; color: #6a6966; font-size: 8.500px; }
.navbtns { width: 60px; margin-left: 6px; height: 14px; }
.navbtns svg { width: 60px; height: 14px; display: block; }
.tsep { width: 1px; height: 9px; background: #d5d3d0; flex: none; }
.tsep.first { height: 14px; margin-left: 6px; }
.addtab { width: 12px; height: 14px; margin-left: 5px; }
.addtab svg { width: 12px; height: 14px; display: block; }
.tab { padding: 0 0 1px; text-align: center; height: 17px; line-height: 15px; flex: none; }
.tab:nth-of-type(4) { width: 59px; }
.tab:nth-of-type(6) { width: 45px; }
.tab:nth-of-type(8) { width: 58px; }
.tab.active { width: 60px; font-weight: 700; color: #3d3846; border-bottom: 2px solid #9a9996; }

.sidebar {
  width: 39px; flex: none; border-left: 1px solid #dddbd8; position: relative;
  display: flex; flex-direction: column; align-items: center; padding-top: 2px;
}
.si { width: 18px; height: 18px; margin-bottom: 11px; flex: none; display: block; }
.si svg { width: 18px; height: 18px; display: block; }
.si.menu { margin-bottom: 13px; margin-top: 2px; }
.fxs { color: #3a8fc9; font: italic 15px "Liberation Serif", serif; text-align: center; }
.handle-side {
  position: absolute; left: 0; top: 269px; width: 5px; height: 50px; background: #8e8e8e;
}

.status { height: 18px; flex: none; display: flex; align-items: center; border-top: 1px solid #dddbd8; font-size: 8.200px; color: #5e5c64; }
.st { height: 100%; display: flex; align-items: center; flex: none; border-right: 1px solid #e4e2df; white-space: nowrap; }
.st1 { width: 180px; padding-left: 6px; gap: 7px; }
.st1 svg { width: 14px; height: 14px; }
.st2 { width: 218px; padding-left: 7px; }
.st3 { width: 200px; padding-left: 8px; }
.st4 { width: 172px; justify-content: center; }
.st5 { width: 45px; }
.st6 { width: 31px; }
.st6 svg { width: 26px; height: 14px; margin-left: 7px; }
.st7 { width: 20px; }
.st8 { width: 185px; justify-content: center; }
.st9 { width: 96px; gap: 1px; padding-left: 4px; }
.st10 { width: 33px; border: 0; justify-content: center; }
.zbtn { width: 12px; font: 700 11px "Liberation Sans", sans-serif; color: #3d3846; text-align: center; flex: none; }
.slider { width: 64px; height: 1px; background: #77767b; position: relative; flex: none; }
.sknob { position: absolute; left: 30px; top: -3px; width: 3px; height: 7px; background: #fff; border: 1px solid #5e5c64; }
```
